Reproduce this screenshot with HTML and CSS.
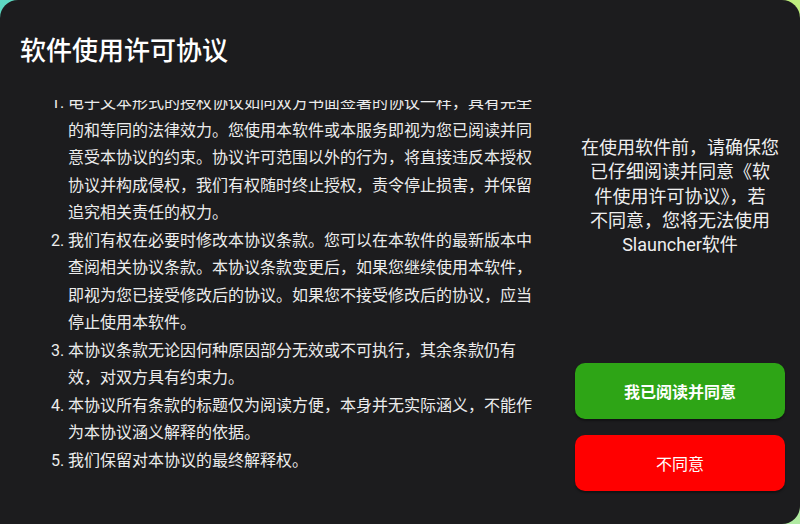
FILE: index.html
```html
<!DOCTYPE html>
<html lang="zh-CN">
<head>
<meta charset="utf-8">
<title>软件使用许可协议</title>
<link rel="stylesheet" href="styles.css">
</head>
<body>
<div class="dialog">
  <section class="main">
    <h1 class="title">软件使用许可协议</h1>
    <div class="scroll">
      <ol class="terms">
        <li><span class="num">1.</span><span class="txt">电子文本形式的授权协议如同双方书面签署的协议一样，具有完全的和等同的法律效力。您使用本软件或本服务即视为您已阅读并同意受本协议的约束。协议许可范围以外的行为，将直接违反本授权协议并构成侵权，我们有权随时终止授权，责令停止损害，并保留追究相关责任的权力。</span></li>
        <li><span class="num">2.</span><span class="txt">我们有权在必要时修改本协议条款。您可以在本软件的最新版本中查阅相关协议条款。本协议条款变更后，如果您继续使用本软件，即视为您已接受修改后的协议。如果您不接受修改后的协议，应当停止使用本软件。</span></li>
        <li><span class="num">3.</span><span class="txt">本协议条款无论因何种原因部分无效或不可执行，其余条款仍有效，对双方具有约束力。</span></li>
        <li><span class="num">4.</span><span class="txt">本协议所有条款的标题仅为阅读方便，本身并无实际涵义，不能作为本协议涵义解释的依据。</span></li>
        <li><span class="num">5.</span><span class="txt">我们保留对本协议的最终解释权。</span></li>
      </ol>
    </div>
  </section>
  <aside class="side">
    <p class="notice">在使用软件前，请确保您<br>已仔细阅读并同意《软<br>件使用许可协议》，若<br>不同意，您将无法使用<br>Slauncher软件</p>
    <div class="actions">
      <button class="btn btn-agree">我已阅读并同意</button>
      <button class="btn btn-decline">不同意</button>
    </div>
  </aside>
</div>
</body>
</html>
```

FILE: styles.css
```css
* { box-sizing: border-box; }

html, body {
  margin: 0;
  padding: 0;
  width: 800px;
  height: 524px;
  overflow: hidden;
}

body {
  background:
    linear-gradient(to bottom, rgba(176, 234, 162, 0) 0%, rgba(176, 234, 162, 0) 60%, rgba(176, 234, 162, 1) 100%),
    linear-gradient(to right, #5cd8c2 0%, #9be69a 50%, #c0f07e 100%);
  font-family: Roboto, "Noto Sans CJK SC", sans-serif;
  color: #ececec;
}

.dialog {
  display: flex;
  width: 800px;
  height: 524px;
  background: #1c1c1e;
  border-radius: 18px 18px 18px 0;
  overflow: hidden;
}

.main {
  flex: 1;
  display: flex;
  flex-direction: column;
  min-width: 0;
}

.title {
  margin: 0;
  padding: 34px 0 0 20px;
  font-size: 26px;
  line-height: 34px;
  font-weight: 500;
  color: #ffffff;
  height: 100px;
}

.scroll {
  flex: 1;
  overflow: hidden;
}

.terms {
  list-style: none;
  margin: -11px 0 0 51px;
  padding: 0;
  width: 487px;
  font-size: 16px;
  line-height: 27.5px;
  color: #ececec;
}

.terms li {
  display: grid;
  grid-template-columns: 17px 1fr;
}

.side {
  width: 240px;
  flex: none;
  display: flex;
  flex-direction: column;
  padding: 136px 15px 33px;
}

.notice {
  margin: 0;
  text-align: center;
  font-size: 18px;
  line-height: 24.3px;
  color: #efefef;
  white-space: nowrap;
}

.actions {
  margin-top: auto;
  display: flex;
  flex-direction: column;
  gap: 16px;
}

.btn {
  height: 56px;
  border: none;
  border-radius: 10px;
  font-family: Roboto, "Noto Sans CJK SC", sans-serif;
  font-size: 16px;
  color: #ffffff;
  box-shadow: 0 2px 2px rgba(0, 0, 0, 0.35);
}

.btn-agree {
  background: #2ea516;
  font-weight: 700;
}

.btn-decline {
  background: #ff0000;
  font-weight: 400;
}
```
